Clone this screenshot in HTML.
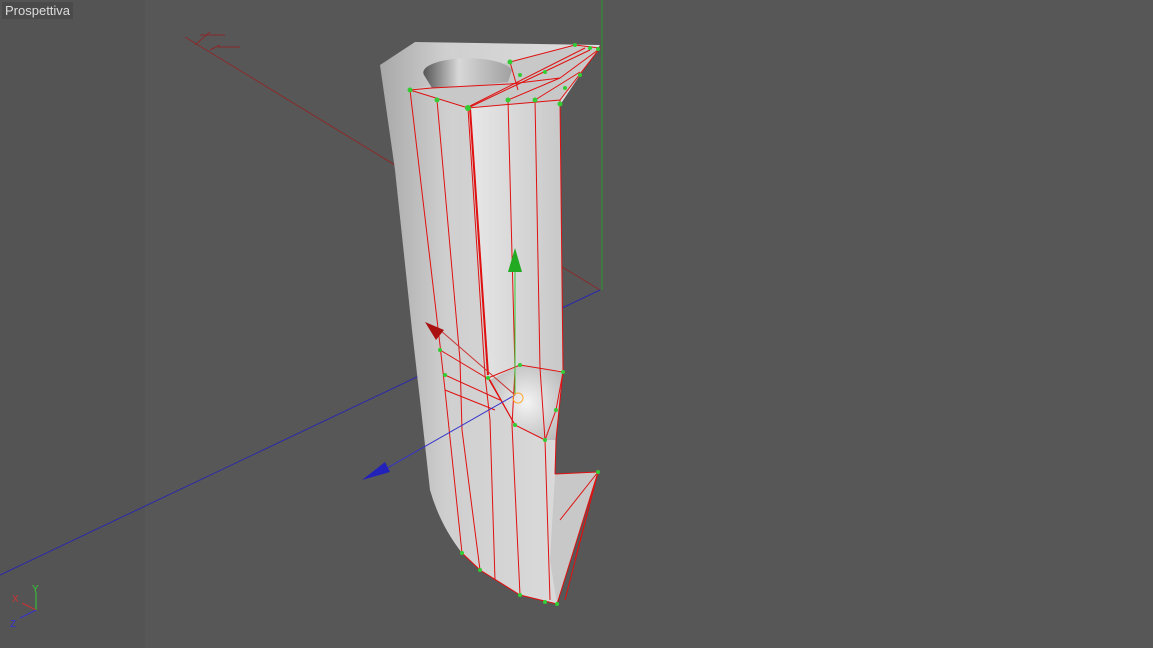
<!DOCTYPE html>
<html><head><style>
html,body{margin:0;padding:0;background:#575757;}
svg{display:block}
.lbl{position:absolute;left:2px;top:2px;background:#4a4a4a;color:#ddd;font:13px "Liberation Sans",sans-serif;padding:1px 3px;}
</style></head><body>
<div style="position:relative;width:1153px;height:648px;overflow:hidden">
<svg width="1153" height="648" viewBox="0 0 1153 648">
<defs>
<linearGradient id="g1" x1="0" x2="1"><stop offset="0" stop-color="#a8a8a8"/><stop offset="0.3" stop-color="#cfcfcf"/><stop offset="1" stop-color="#dedede"/></linearGradient>
<linearGradient id="g2" x1="0" x2="1"><stop offset="0" stop-color="#e8e8e8"/><stop offset="1" stop-color="#c8c8c8"/></linearGradient>
<radialGradient id="g3" cx="0.5" cy="0.5" r="0.6"><stop offset="0" stop-color="#f4f4f4"/><stop offset="1" stop-color="#bcbcbc"/></radialGradient>
<linearGradient id="g4" x1="0" x2="1"><stop offset="0" stop-color="#555"/><stop offset="0.4" stop-color="#d8d8d8"/><stop offset="1" stop-color="#a0a0a0"/></linearGradient>
</defs>
<rect x="0" y="0" width="145" height="648" fill="#545454"/>
<rect x="145" y="0" width="1008" height="648" fill="#575757"/>
<line x1="185" y1="37" x2="600" y2="290" stroke="#8a2a2a" stroke-width="1"/>
<line x1="200" y1="35" x2="225" y2="35" stroke="#8a2a2a"/><line x1="195" y1="45" x2="210" y2="32" stroke="#8a2a2a"/>
<line x1="210" y1="50" x2="220" y2="45" stroke="#8a2a2a"/><line x1="218" y1="47" x2="240" y2="47" stroke="#8a2a2a"/>
<line x1="602" y1="0" x2="602" y2="290" stroke="#2a9a2a"/>
<line x1="0" y1="575" x2="600" y2="290" stroke="#2a2aaa"/>
<path d="M380,65 L415,42 L600,45 L560,105 L563,370 L556,440 L555,474 L598,472 L557,604 L520,595 L480,570 L462,553 Q440,525 430,490 L420,400 L412,330 L395,170 Z" fill="url(#g1)"/>
<path d="M468,108 L560,100 L563,370 L520,370 L490,380 Z" fill="url(#g2)"/>
<path d="M490,380 L520,365 L563,372 L556,440 L545,440 L515,425 Z" fill="url(#g3)"/>
<path d="M555,474 L598,472 L557,604 Z" fill="#b0b0b0"/>
<path d="M555,474 L598,472 L557,604 L550,560 Z" fill="#c8c8c8"/>
<path d="M410,90 L468,108 L560,100 L600,48 L575,45 L510,62 Z" fill="#c8c8c8"/>
<path d="M424,75 A44,14 0 0 1 512,70 L508,82 L470,86 L432,88 Z" fill="url(#g4)"/>
<g stroke="#e01010" stroke-width="1" fill="none">
<path d="M410,90 L468,108 L560,100 L600,48 L575,45 L510,62"/>
<path d="M410,90 L432,88 L470,86 L510,84 L560,78 L598,50"/>
<path d="M468,108 L510,88 L590,50"/><path d="M470,106 L585,48"/>
<path d="M508,100 L560,78"/><path d="M535,100 L580,72"/><path d="M510,62 L518,90"/>
<path d="M410,90 L440,345 L445,390 L462,553 L480,570 L520,595 L557,604"/>
<path d="M437,100 L460,360 L462,430 L480,570"/>
<path d="M468,108 L485,375 L490,420 L495,580"/>
<path d="M470,108 L488,375" stroke-width="2"/>
<path d="M508,100 L515,370 L512,425 L520,595"/>
<path d="M535,100 L540,368 L545,440 L550,600"/>
<path d="M560,100 L563,370 L556,440 L555,474"/>
<path d="M488,378 L520,365 L563,372 L556,410 L545,440 L515,425 L488,378"/>
<path d="M440,350 L490,380 L515,425"/><path d="M445,375 L500,400"/><path d="M445,390 L495,410"/>
<path d="M555,474 L598,472 L557,604"/><path d="M598,472 L565,600"/><path d="M598,472 L575,560"/><path d="M598,472 L560,520"/>
</g>
<g fill="#3c3">
<circle cx="410" cy="90" r="2.5"/><circle cx="437" cy="100" r="2.5"/><circle cx="468" cy="108" r="3"/><circle cx="508" cy="100" r="2.5"/><circle cx="535" cy="100" r="2.5"/><circle cx="560" cy="104" r="2.5"/>
<circle cx="510" cy="62" r="2.5"/><circle cx="520" cy="75" r="2"/><circle cx="545" cy="72" r="2"/><circle cx="575" cy="45" r="2"/><circle cx="590" cy="48" r="2"/><circle cx="598" cy="49" r="2"/><circle cx="580" cy="75" r="2"/><circle cx="565" cy="88" r="2"/>
<circle cx="440" cy="350" r="2"/><circle cx="445" cy="375" r="2"/><circle cx="488" cy="378" r="2"/><circle cx="520" cy="365" r="2"/><circle cx="563" cy="372" r="2"/><circle cx="556" cy="410" r="2"/><circle cx="545" cy="440" r="2"/><circle cx="515" cy="425" r="2"/>
<circle cx="462" cy="553" r="2"/><circle cx="480" cy="570" r="2"/><circle cx="520" cy="595" r="2"/><circle cx="557" cy="604" r="2"/><circle cx="545" cy="602" r="2"/><circle cx="598" cy="472" r="2"/>
</g>
<line x1="515" y1="270" x2="515" y2="395" stroke="#3c3"/>
<path d="M508,272 L515,248 L522,272 Z" fill="#2a2"/>
<line x1="440" y1="330" x2="515" y2="395" stroke="#c33"/>
<path d="M425,322 L444,330 L436,340 Z" fill="#a11"/>
<line x1="375" y1="475" x2="515" y2="395" stroke="#33c"/>
<path d="M362,480 L385,462 L390,472 Z" fill="#22b"/>
<circle cx="518" cy="398" r="5" fill="none" stroke="#fa3"/>
<line x1="36" y1="592" x2="36" y2="610" stroke="#3c3"/><text x="32" y="592" fill="#3c3" font-size="10" font-family="Liberation Sans">Y</text>
<line x1="22" y1="603" x2="36" y2="610" stroke="#c33"/><text x="12" y="602" fill="#c33" font-size="10" font-family="Liberation Sans">X</text>
<line x1="20" y1="618" x2="36" y2="610" stroke="#33c"/><text x="10" y="627" fill="#33c" font-size="10" font-family="Liberation Sans">Z</text>
</svg>
<div class="lbl">Prospettiva</div>
</div>
</body></html>
